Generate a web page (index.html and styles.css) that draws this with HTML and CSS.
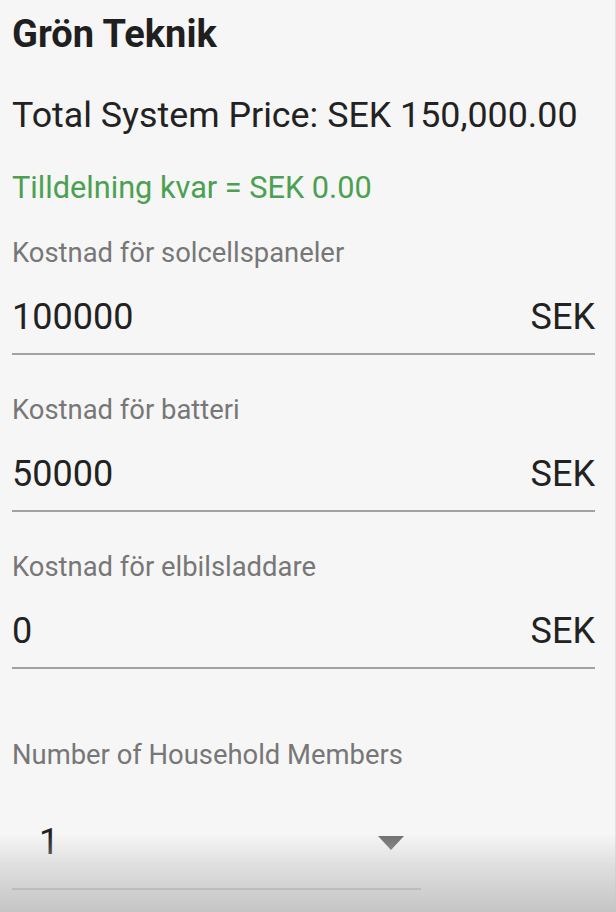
FILE: index.html
```html
<!DOCTYPE html>
<html lang="sv">
<head>
<meta charset="utf-8">
<title>Grön Teknik</title>
<link rel="stylesheet" href="styles.css">
</head>
<body>
<main class="page">
  <h1 class="title">Grön Teknik</h1>
  <p class="total">Total System Price: SEK 150,000.00</p>
  <p class="remaining">Tilldelning kvar = SEK 0.00</p>

  <div class="field">
    <label class="field-label">Kostnad för solcellspaneler</label>
    <div class="field-input">
      <span class="field-value">100000</span>
      <span class="field-adorn">SEK</span>
    </div>
  </div>

  <div class="field">
    <label class="field-label">Kostnad för batteri</label>
    <div class="field-input">
      <span class="field-value">50000</span>
      <span class="field-adorn">SEK</span>
    </div>
  </div>

  <div class="field">
    <label class="field-label">Kostnad för elbilsladdare</label>
    <div class="field-input">
      <span class="field-value">0</span>
      <span class="field-adorn">SEK</span>
    </div>
  </div>

  <div class="field field-select">
    <label class="field-label">Number of Household Members</label>
    <div class="select-input">
      <span class="select-value">1</span>
      <svg class="select-arrow" width="26" height="14" viewBox="0 0 26 14" aria-hidden="true">
        <path d="M0 0 H26 L13 14 Z" fill="#707070"/>
      </svg>
    </div>
  </div>
</main>
<div class="bottom-shade"></div>
</body>
</html>
```

FILE: styles.css
```css
html, body {
  margin: 0;
  padding: 0;
  background: #f6f6f6;
}

body {
  font-family: Roboto, "Noto Sans", "Liberation Sans", sans-serif;
  color: #222222;
  height: 912px;
  overflow: hidden;
  border-right: 1px solid #e2e2e2;
  box-sizing: border-box;
}

.page {
  display: flex;
  flex-direction: column;
  padding: 12px 0 0 12px;
  width: 583px;
}

.title {
  margin: 0;
  font-size: 38px;
  font-weight: 700;
  line-height: 44px;
  color: #1f1f1f;
}

.total {
  margin: 37px 0 0;
  font-size: 35.8px;
  line-height: 44px;
  font-weight: 400;
}

.remaining {
  margin: 31px 0 0;
  font-size: 30.7px;
  line-height: 40px;
  color: #4ba052;
}

.field {
  display: flex;
  flex-direction: column;
  margin-top: 39px;
}

.remaining + .field {
  margin-top: 29px;
}

.field-label {
  font-size: 27.4px;
  line-height: 32px;
  color: #777777;
}

.field-input {
  display: flex;
  justify-content: space-between;
  align-items: baseline;
  margin-top: 26px;
  padding-bottom: 14px;
  border-bottom: 2px solid #a2a2a2;
  font-size: 36px;
  line-height: 44px;
}

.field-adorn {
  color: #222222;
}

.field-select {
  margin-top: 70px;
}

.select-input {
  display: flex;
  align-items: center;
  width: 409px;
  margin-top: 49px;
  padding-bottom: 24px;
  border-bottom: 2px solid #a2a2a2;
  font-size: 36px;
  line-height: 44px;
}

.select-value {
  flex: 1;
  padding-left: 27px;
}

.select-arrow {
  margin-right: 17px;
  margin-top: 2px;
}

.bottom-shade {
  position: fixed;
  left: 0;
  right: 0;
  bottom: 0;
  height: 78px;
  background: linear-gradient(to bottom, rgba(200,200,200,0) 0%, rgba(200,200,200,0.55) 45%, rgba(196,196,196,1) 100%);
  pointer-events: none;
}
```
